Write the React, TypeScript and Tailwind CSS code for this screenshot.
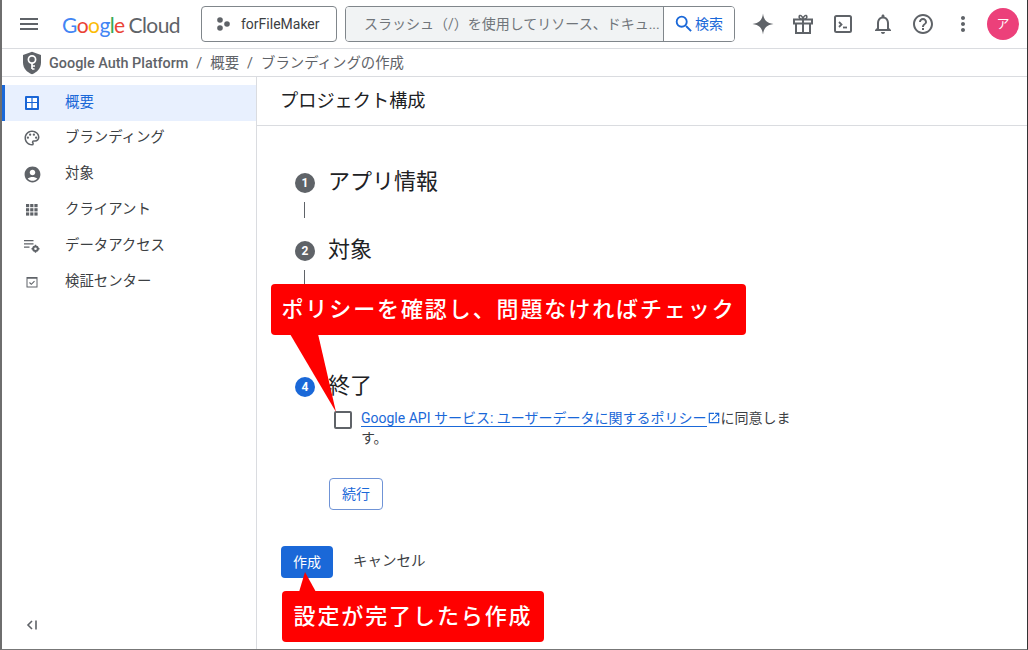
const JP = '"Roboto","Noto Sans CJK JP",sans-serif';

function Ic({ d, size = 24, className = "", fill = "#5f6368" }: { d: string; size?: number; className?: string; fill?: string }) {
  return (
    <svg width={size} height={size} viewBox="0 0 24 24" fill={fill} className={className}>
      <path d={d} />
    </svg>
  );
}

const menu = "M3 18h18v-2H3v2zm0-5h18v-2H3v2zm0-7v2h18V6H3z";
const search = "M15.5 14h-.79l-.28-.27A6.471 6.471 0 0 0 16 9.5 6.5 6.5 0 1 0 9.5 16c1.61 0 3.09-.59 4.23-1.57l.27.28v.79l5 4.99L20.49 19l-4.99-5zm-6 0C7.01 14 5 11.99 5 9.5S7.01 5 9.5 5 14 7.01 14 9.5 11.99 14 9.5 14z";
const bell = "M12 22c1.1 0 2-.9 2-2h-4c0 1.1.9 2 2 2zm6-6v-5c0-3.07-1.63-5.64-4.5-6.32V4c0-.83-.67-1.5-1.5-1.5s-1.5.67-1.5 1.5v.68C7.64 5.36 6 7.92 6 11v5l-2 2v1h16v-1l-2-2zm-2 1H8v-6c0-2.48 1.51-4.5 4-4.5s4 2.02 4 4.5v6z";
const help = "M11 18h2v-2h-2v2zm1-16C6.48 2 2 6.48 2 12s4.48 10 10 10 10-4.48 10-10S17.52 2 12 2zm0 18c-4.41 0-8-3.59-8-8s3.59-8 8-8 8 3.59 8 8-3.59 8-8 8zm0-14c-2.21 0-4 1.79-4 4h2c0-1.1.9-2 2-2s2 .9 2 2c0 2-3 1.75-3 5h2c0-2.25 3-2.5 3-5 0-2.21-1.79-4-4-4z";
const more = "M12 8c1.1 0 2-.9 2-2s-.9-2-2-2-2 .9-2 2 .9 2 2 2zm0 2c-1.1 0-2 .9-2 2s.9 2 2 2 2-.9 2-2-.9-2-2-2zm0 6c-1.1 0-2 .9-2 2s.9 2 2 2 2-.9 2-2-.9-2-2-2z";
const spark = "M12 1.500C12.700 8 16 11.300 22.500 12 16 12.700 12.700 16 12 22.500 11.300 16 8 12.700 1.500 12 8 11.300 11.300 8 12 1.500z";
const person = "M12 2C6.48 2 2 6.48 2 12s4.48 10 10 10 10-4.48 10-10S17.52 2 12 2zm0 4c1.93 0 3.5 1.57 3.5 3.5S13.93 13 12 13s-3.5-1.57-3.5-3.5S10.07 6 12 6zm0 14c-2.03 0-4.43-.82-6.14-2.88C7.55 15.8 9.68 15 12 15s4.45.8 6.14 2.12C16.43 19.18 14.03 20 12 20z";

function Gift() {
  return (
    <svg width="24" height="24" viewBox="0 0 24 24" fill="none" stroke="#5f6368" strokeWidth="2">
      <path d="M3 7.500h18v4H3zM5 11.500V21h14v-9.500M12 7.500V21" />
      <path d="M12 7.500C9.500 7.500 7.800 6.300 8.200 4.500S11.300 3 12 7.500zM12 7.500c2.500 0 4.200-1.200 3.800-3S12.700 3 12 7.500z" strokeWidth="1.600" />
    </svg>
  );
}
function Term() {
  return (
    <svg width="24" height="24" viewBox="0 0 24 24" fill="none" stroke="#5f6368" strokeWidth="2">
      <rect x="4" y="4" width="16" height="16" rx="1.500" />
      <path d="M8 10l2.500 2.500L8 15" strokeWidth="1.800" />
      <path d="M12 15.500h4" strokeWidth="1.800" />
    </svg>
  );
}
function Shield() {
  return (
    <svg width="20" height="24" viewBox="0 0 20 24">
      <path d="M10 0.800L19 4v7.500c0 5.600-3.800 9.800-9 11.700C4.800 21.300 1 17.100 1 11.500V4z" fill="#5f6368" />
      <circle cx="10" cy="8.500" r="3.600" fill="none" stroke="#fff" strokeWidth="1.700" />
      <path d="M10 12v6M10 15h3M10 18h2.500" stroke="#fff" strokeWidth="1.700" fill="none" />
    </svg>
  );
}
function OverviewIcon() {
  return (
    <svg width="14" height="14" viewBox="0 0 14 14">
      <rect x="0" y="0" width="14" height="14" rx="1" fill="#1a66d6" />
      <rect x="2" y="2" width="10" height="10" fill="#fff" />
      <path d="M7 2v10M2 6.500h10" stroke="#1a66d6" strokeWidth="1.200" />
    </svg>
  );
}
function Palette() {
  return (
    <svg width="18" height="18" viewBox="0 0 24 24" fill="#5f6368">
      <path d="M12 22C6.490 22 2 17.510 2 12S6.490 2 12 2s10 4.040 10 9c0 3.310-2.690 6-6 6h-1.770c-.28 0-.5.22-.5.5 0 .12.05.23.13.33.41.47.64 1.060.64 1.670A2.500 2.500 0 0 1 12 22zm0-18c-4.410 0-8 3.590-8 8s3.590 8 8 8c.28 0 .5-.22.5-.5a.54.54 0 0 0-.14-.35c-.41-.46-.63-1.050-.63-1.650a2.500 2.500 0 0 1 2.500-2.500H16c2.210 0 4-1.790 4-4 0-3.860-3.590-7-8-7z" />
      <circle cx="6.500" cy="11.500" r="1.500" /><circle cx="9.500" cy="7.500" r="1.500" /><circle cx="14.500" cy="7.500" r="1.500" /><circle cx="17.500" cy="11.500" r="1.500" />
    </svg>
  );
}
function Grid() {
  return (
    <svg width="14" height="14" viewBox="0 0 14 14" fill="#5f6368">
      {[1, 5.200, 9.400].flatMap((y) => [1, 5.200, 9.400].map((x) => <rect key={`${x}-${y}`} x={x} y={y} width="3.200" height="3.200" />))}
    </svg>
  );
}
function DataAccess() {
  return (
    <svg width="18" height="18" viewBox="0 0 18 18" fill="#5f6368">
      <path d="M1 3h9.500v1.300H1zM1 6.200h9.500v1.300H1zM1 9.400h5.500v1.300H1z" />
      <circle cx="12.500" cy="11.800" r="2.300" fill="none" stroke="#5f6368" strokeWidth="2" />
      <path d="M11.800 7.800h1.400v1.500h-1.400zM11.800 14.300h1.400v1.500h-1.400zM8.500 11.100h1.500v1.400H8.500zM15 11.100h1.500v1.400H15z" />
    </svg>
  );
}
function Verify() {
  return (
    <svg width="14" height="14" viewBox="0 0 14 14" fill="none" stroke="#5f6368">
      <rect x="2" y="2.500" width="10" height="9.500" strokeWidth="1" />
      <path d="M2 3h10" strokeWidth="1.500" />
      <path d="M4.500 7.500l1.800 1.800 3.200-3.200" strokeWidth="1.100" />
    </svg>
  );
}

const nav = [
  { t: "概要", i: <OverviewIcon />, active: true },
  { t: "ブランディング", i: <Palette /> },
  { t: "対象", i: <Ic d={person} size={19} /> },
  { t: "クライアント", i: <Grid /> },
  { t: "データアクセス", i: <DataAccess /> },
  { t: "検証センター", i: <Verify /> },
];

function StepHead({ n, title, active }: { n: number; title: string; active?: boolean }) {
  return (
    <div className="flex h-[24px] items-center">
      <div className={`flex h-[20px] w-[20px] items-center justify-center rounded-full text-[12px] font-bold text-white ${active ? "bg-[#1a68d8]" : "bg-[#5f6368]"}`}>{n}</div>
      <div className="mb-[3px] ml-[13px] text-[22px] leading-[24px] text-[#202124]">{title}</div>
    </div>
  );
}
function Connector() {
  return (
    <div className="flex h-[44px] items-start pl-[9px] pt-[7px]">
      <div className="h-[16px] w-[1px] bg-[#5f6368]" />
    </div>
  );
}

export default function App() {
  return (
    <div className="relative flex h-[650px] w-[1028px] flex-col overflow-hidden border-b border-l-2 border-r border-b-[#777] border-l-[#6e6e6e] border-r-[#333] bg-white" style={{ fontFamily: JP }}>
      <header className="flex h-[49px] shrink-0 items-center border-b border-[#dadce0]">
        <div className="ml-[15px] flex w-[24px] justify-center"><Ic d={menu} /></div>
        <div className="ml-[21px] flex w-[118px] items-baseline text-[21px] leading-none tracking-[-0.6px]" style={{ fontFamily: 'Lato,sans-serif' }}>
          <span className="text-[#4285f4]">G</span><span className="text-[#ea4335]">o</span><span className="text-[#fbbc05]">o</span><span className="text-[#4285f4]">g</span><span className="text-[#34a853]">l</span><span className="text-[#ea4335]">e</span>
          <span className="ml-[4px] text-[#5f6368]">Cloud</span>
        </div>
        <button className="ml-[21px] flex h-[36px] w-[136px] items-center rounded-[4px] border border-[#80868b] pl-[14px] text-[14px] text-[#3c4043]">
          <svg width="16" height="14" viewBox="0 0 16 14" fill="#5f6368"><circle cx="4" cy="3" r="2.800" /><circle cx="4" cy="11" r="2.800" /><circle cx="11" cy="7" r="2.800" /></svg>
          <span className="ml-[9px]">forFileMaker</span>
        </button>
        <div className="ml-[8px] flex h-[36px] w-[390px] items-stretch overflow-hidden rounded-[4px] border border-[#80868b]">
          <div className="flex w-[317px] shrink-0 items-center bg-[#f1f3f4] pl-[18px] text-[14px] whitespace-nowrap text-[#70757a]">
            スラッシュ（/）を使用してリソース、ドキュ...
          </div>
          <div className="flex flex-1 items-center border-l border-[#80868b] bg-white pl-[9px] text-[14px] text-[#1a68d8]">
            <Ic d={search} size={22} fill="#1a68d8" />
            <span>検索</span>
          </div>
        </div>
        <div className="ml-[16px] flex w-[24px] justify-center"><Ic d={spark} size={26} /></div>
        <div className="ml-[16px] flex w-[24px] justify-center"><Gift /></div>
        <div className="ml-[16px] flex w-[24px] justify-center"><Term /></div>
        <div className="ml-[16px] flex w-[24px] justify-center"><Ic d={bell} /></div>
        <div className="ml-[16px] flex w-[24px] justify-center"><Ic d={help} /></div>
        <div className="ml-[16px] flex w-[24px] justify-center"><Ic d={more} /></div>
        <div className="ml-[12px] flex h-[32px] w-[32px] items-center justify-center rounded-full bg-[#ec407a] text-[13px] text-white">ア</div>
      </header>

      <div className="flex h-[28px] shrink-0 items-center border-b border-[#dadce0] pl-[20px] text-[14.400px] text-[#5f6368]">
        <Shield />
        <span className="ml-[7px] pt-[2px] font-medium">Google Auth Platform</span>
        <span className="mx-[8px] pt-[2px]">/</span>
        <span className="pt-[2px]">概要</span>
        <span className="mx-[8px] pt-[2px]">/</span>
        <span className="pt-[2px]">ブランディングの作成</span>
      </div>

      <div className="flex min-h-0 flex-1">
        <aside className="flex w-[255px] shrink-0 flex-col border-r border-[#dadce0] pt-[8px]">
          {nav.map((n) => (
            <div key={n.t} className={`flex h-[36px] items-center text-[14.400px] ${n.active ? "border-l-[3px] border-[#1a68d8] bg-[#e8f0fe] text-[#1a68d8]" : "border-l-[3px] border-transparent text-[#3c4043]"}`}>
              <div className={`flex w-[56px] justify-center pr-[2px] ${n.active ? "" : "mb-[2px]"}`}>{n.i}</div>
              <span className={`ml-[4px] ${n.active ? "" : "mb-[2px]"}`}>{n.t}</span>
            </div>
          ))}
          <div className="mt-auto flex h-[48px] items-center pl-[24px]">
            <svg width="12" height="12" viewBox="0 0 12 12" fill="none" stroke="#5f6368" strokeWidth="1.600"><path d="M6 2L2 6l4 4M10 1.500v9" /></svg>
          </div>
        </aside>

        <main className="min-w-0 flex-1">
          <div className="flex h-[49px] items-center border-b border-[#dadce0] pb-[1px] pl-[23px] text-[18.200px] text-[#202124]">プロジェクト構成</div>
          <div className="pl-[38px] pt-[45px]">
            <StepHead n={1} title="アプリ情報" />
            <Connector />
            <StepHead n={2} title="対象" />
            <Connector />
            <div className="h-[24px]" />
            <Connector />
            <StepHead n={4} title="終了" active />
            <div className="ml-[39px] mt-[9px] flex w-[470px] items-start">
              <div className="mt-[3px] h-[18px] w-[18px] shrink-0 rounded-[2px] border-2 border-[#5f6368]" />
              <p className="ml-[9px] w-[442px] text-[14px] leading-[20px] text-[#3c4043]">
                <span className="border-b border-[#1a68d8] text-[#1a68d8]">Google API サービス: ユーザーデータに関するポリシー</span>
                <svg width="14" height="14" viewBox="0 0 24 24" fill="#1a68d8" className="inline align-[-2px]"><path d="M19 19H5V5h7V3H3v18h18v-9h-2v7zM14 3v2h3.590l-9.830 9.830 1.410 1.410L19 6.410V10h2V3h-7z" /></svg>
                <span>に同意します。</span>
              </p>
            </div>
            <button className="ml-[34px] mt-[30px] flex h-[32px] w-[54px] items-center justify-center rounded-[4px] border border-[#6f93d6] text-[14px] text-[#1a68d8]">続行</button>
          </div>
          <div className="mt-[36px] flex items-center pl-[24px] text-[14.500px]">
            <button className="h-[32px] w-[52px] rounded-[4px] bg-[#1a68d8] text-[14px] text-white">作成</button>
            <span className="ml-[20px] text-[#3c4043]">キャンセル</span>
          </div>
        </main>
      </div>

      <div className="absolute left-[269px] top-[284px] flex h-[51px] w-[475px] items-center justify-center rounded-[4px] bg-[#ff0000] text-[22px] font-medium tracking-[1.900px] whitespace-nowrap text-white">
        ポリシーを確認し、問題なければチェック
      </div>
      <svg className="absolute left-[286px] top-[334px]" width="52" height="80" viewBox="0 0 52 80"><path d="M2 0L48 78 30 0z" fill="#ff0000" /></svg>
      <div className="absolute left-[280px] top-[591px] flex h-[51px] w-[262px] items-center justify-center rounded-[4px] bg-[#ff0000] text-[22px] font-medium tracking-[1.900px] whitespace-nowrap text-white">
        設定が完了したら作成
      </div>
      <svg className="absolute left-[297px] top-[572px]" width="18" height="20" viewBox="0 0 18 20"><path d="M6 0L0 20h17z" fill="#ff0000" /></svg>
    </div>
  );
}
